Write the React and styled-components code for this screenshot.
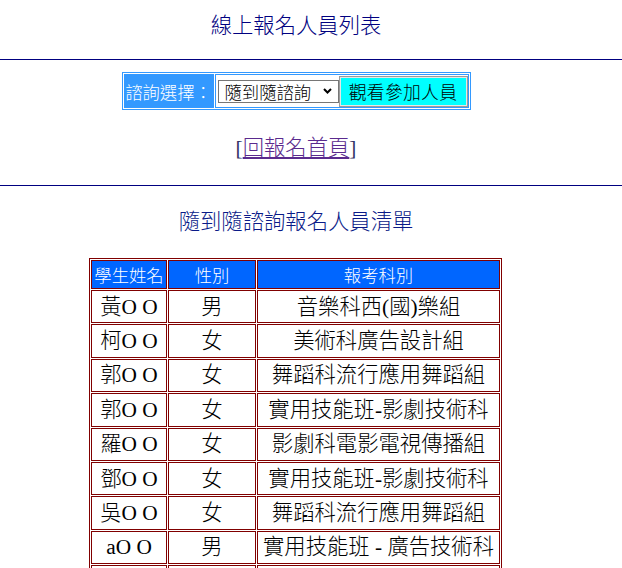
import React from "react";
import styled, { createGlobalStyle } from "styled-components";

const Global = createGlobalStyle`
  * { box-sizing: border-box; }
  html, body { margin: 0; padding: 0; background: #fff; }
  body {
    font-family: "Liberation Serif", "Noto Sans CJK TC", serif;
    font-weight: 300;
    color: #000;
  }
`;

const Page = styled.div`
  width: 622px;
`;

const Center = styled.div`
  width: 592px;
  text-align: center;
`;

const Title = styled.div`
  width: 592px;
  text-align: center;
  font-family: "Noto Sans CJK TC", sans-serif;
  font-weight: 300;
  font-size: 16pt;
  line-height: 32px;
  color: ${(p) => p.$color || "#000080"};
  padding-top: ${(p) => p.$top || 0}px;
  margin-bottom: ${(p) => p.$bottom || 0}px;
`;

const Rule = styled.hr`
  margin: 0;
  border: 0;
  height: 1px;
  background: #000080;
`;

const FormBox = styled.div`
  display: inline-flex;
  gap: 1px;
  padding: 1px;
  border: 1px solid #3399ff;
  margin-top: 12px;
  vertical-align: top;
`;

const LabelCell = styled.div`
  width: 90px;
  height: 34px;
  border: 1px solid #3399ff;
  background: #3399ff;
  color: #fff;
  font-family: "Noto Sans CJK TC", sans-serif;
  font-weight: 300;
  font-size: 13pt;
  display: flex;
  align-items: center;
  justify-content: center;
  white-space: nowrap;
`;

const ControlCell = styled.div`
  width: 254px;
  height: 34px;
  border: 1px solid #3399ff;
  display: flex;
  align-items: center;
  padding-left: 2px;
`;

const SelectWrap = styled.div`
  position: relative;
  width: 121px;
  height: 23px;
`;

const Select = styled.select`
  appearance: none;
  -webkit-appearance: none;
  width: 121px;
  height: 23px;
  margin: 0;
  border: 1px solid #767676;
  border-radius: 0;
  background: #fff;
  color: #000;
  font-family: "Noto Sans CJK TC", sans-serif;
  font-weight: 300;
  font-size: 13pt;
  line-height: 21px;
  padding: 0 0 0 6px;
  outline: none;
`;

const Chevron = styled.svg`
  position: absolute;
  right: 7px;
  top: 8px;
  pointer-events: none;
`;

const Button = styled.button`
  width: 129px;
  height: 31px;
  margin: 0;
  padding: 0;
  background: #00ffff;
  border: 1px solid #9a9a9a;
  box-shadow: inset 0 0 0 1px #e6e6e6;
  border-radius: 0;
  color: #000;
  font-family: "Noto Sans CJK TC", sans-serif;
  font-weight: 300;
  font-size: 17.8px;
  letter-spacing: 0.3px;
`;

const LinkLine = styled.div`
  width: 592px;
  text-align: center;
  font-size: 16pt;
  line-height: 32px;
  color: #333366;
  margin-top: 20px;
  margin-bottom: 21px;
`;

const Link = styled.a`
  color: #5a2a8e;
  font-family: "Noto Sans CJK TC", sans-serif;
  font-weight: 300;
  text-decoration: underline;
  text-underline-offset: 2px;
`;

const Table = styled.table`
  width: 413px;
  margin: 0 0 0 89px;
  border: 1px solid #800000;
  border-collapse: separate;
  border-spacing: 1px;
  table-layout: fixed;
  empty-cells: show;
`;

const HeadCell = styled.th`
  width: ${(p) => p.$w}px;
  height: 29px;
  padding: 0;
  border: 1px solid #800000;
  background: #0066ff;
  color: #fff;
  font-family: "Noto Sans CJK TC", sans-serif;
  font-weight: 300;
  font-size: 13pt;
  line-height: 20px;
  white-space: nowrap;
`;

const Cell = styled.td`
  height: 33.375px;
  padding: 0;
  border: 1px solid #800000;
  text-align: center;
  font-size: 16pt;
  line-height: 20px;
  white-space: nowrap;
`;

const rows = [
  ["黃O O", "男", "音樂科西(國)樂組"],
  ["柯O O", "女", "美術科廣告設計組"],
  ["郭O O", "女", "舞蹈科流行應用舞蹈組"],
  ["郭O O", "女", "實用技能班-影劇技術科"],
  ["羅O O", "女", "影劇科電影電視傳播組"],
  ["鄧O O", "女", "實用技能班-影劇技術科"],
  ["吳O O", "女", "舞蹈科流行應用舞蹈組"],
  ["aO O", "男", "實用技能班 - 廣告技術科"],
  ["", "", ""],
];

export default function App() {
  return (
    <Page>
      <Global />
      <Title $top={8} $bottom={19}>線上報名人員列表</Title>
      <Rule />
      <Center>
        <FormBox>
          <LabelCell>諮詢選擇：</LabelCell>
          <ControlCell>
            <SelectWrap>
              <Select defaultValue="a">
                <option value="a">隨到隨諮詢</option>
              </Select>
              <Chevron width="9" height="6" viewBox="0 0 9 6">
                <path d="M1 1 L4.5 4.5 L8 1" fill="none" stroke="#000" strokeWidth="2" />
              </Chevron>
            </SelectWrap>
            <Button type="button">觀看參加人員</Button>
          </ControlCell>
        </FormBox>
      </Center>
      <LinkLine>
        [<Link href="#">回報名首頁</Link>]
      </LinkLine>
      <Rule />
      <Title $top={18} $bottom={22} $color="#0a1a88">隨到隨諮詢報名人員清單</Title>
      <Table>
        <thead>
          <tr>
            <HeadCell $w={76}>學生姓名</HeadCell>
            <HeadCell $w={88}>性別</HeadCell>
            <HeadCell $w={243}>報考科別</HeadCell>
          </tr>
        </thead>
        <tbody>
          {rows.map((r, i) => (
            <tr key={i}>
              <Cell>{r[0]}</Cell>
              <Cell>{r[1]}</Cell>
              <Cell>{r[2]}</Cell>
            </tr>
          ))}
        </tbody>
      </Table>
    </Page>
  );
}
